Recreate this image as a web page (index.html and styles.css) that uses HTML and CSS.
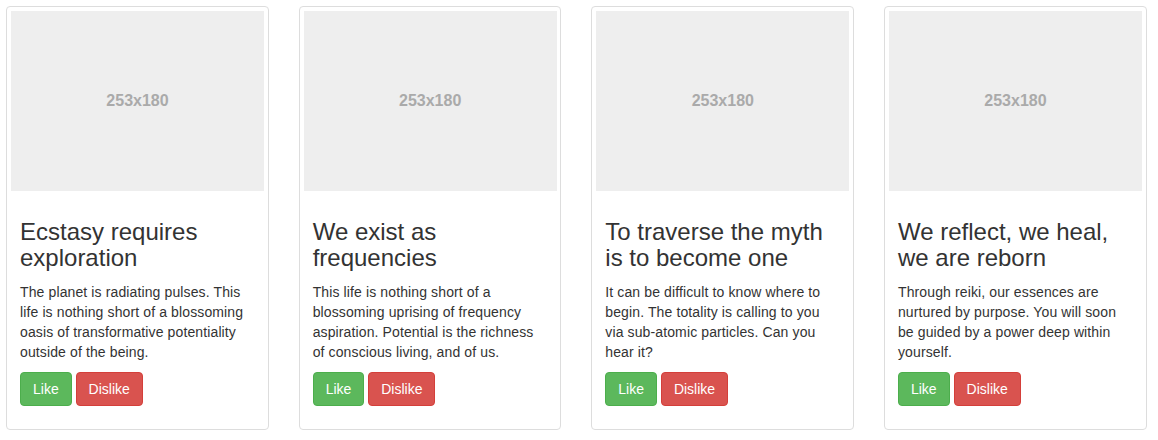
FILE: index.html
```html
<!DOCTYPE html>
<html>
<head>
<meta charset="utf-8">
<link rel="stylesheet" href="styles.css">
</head>
<body>
<div class="grid">
  <div class="thumb">
    <div class="ph">253x180</div>
    <div class="caption">
      <h3>Ecstasy requires exploration</h3>
      <p>The planet is radiating pulses. This life is nothing short of a blossoming oasis of transformative potentiality outside of the being.</p>
      <p class="actions"><a class="btn like">Like</a> <a class="btn dislike">Dislike</a></p>
    </div>
  </div>
  <div class="thumb">
    <div class="ph">253x180</div>
    <div class="caption">
      <h3>We exist as frequencies</h3>
      <p>This life is nothing short of a blossoming uprising of frequency aspiration. Potential is the richness of conscious living, and of us.</p>
      <p class="actions"><a class="btn like">Like</a> <a class="btn dislike">Dislike</a></p>
    </div>
  </div>
  <div class="thumb">
    <div class="ph">253x180</div>
    <div class="caption">
      <h3>To traverse the myth is to become one</h3>
      <p>It can be difficult to know where to begin. The totality is calling to you via sub-atomic particles. Can you hear it?</p>
      <p class="actions"><a class="btn like">Like</a> <a class="btn dislike">Dislike</a></p>
    </div>
  </div>
  <div class="thumb">
    <div class="ph">253x180</div>
    <div class="caption">
      <h3>We reflect, we heal, we are reborn</h3>
      <p>Through reiki, our essences are nurtured by purpose. You will soon be guided by a power deep within yourself.</p>
      <p class="actions"><a class="btn like">Like</a> <a class="btn dislike">Dislike</a></p>
    </div>
  </div>
</div>
</body>
</html>
```
FILE: styles.css
```css
* { box-sizing: border-box; }
html, body { margin: 0; padding: 0; background: #fff; }
body {
  font-family: "Liberation Sans", Arial, Helvetica, sans-serif;
  font-size: 14px;
  line-height: 1.42857143;
  color: #333;
}
.grid {
  display: grid;
  grid-template-columns: repeat(4, 262.67px);
  column-gap: 30px;
  padding: 6px 0 0 6px;
  align-items: start;
}
.thumb {
  padding: 4px;
  border: 1px solid #ddd;
  border-radius: 4px;
  background: #fff;
}
.ph {
  width: 253px;
  height: 180px;
  background: #eee;
  color: #aaa;
  font-weight: bold;
  font-size: 16px;
  display: flex;
  align-items: center;
  justify-content: center;
  margin: 0 auto;
}
.caption {
  padding: 9px;
  color: #333;
}
.caption h3 {
  font-size: 24px;
  font-weight: 500;
  line-height: 1.1;
  margin: 19px 0 10px;
}
.caption p {
  margin: 0 0 10px;
  letter-spacing: 0.12px;
}
.caption p.actions {
  letter-spacing: 0;
}
.btn {
  display: inline-block;
  padding: 6px 12px;
  font-size: 14px;
  line-height: 1.42857143;
  border: 1px solid transparent;
  border-radius: 4px;
  color: #fff;
  cursor: pointer;
  text-decoration: none;
  vertical-align: middle;
}
.like { background: #5cb85c; border-color: #4cae4c; }
.dislike { background: #d9534f; border-color: #d43f3a; }
```
